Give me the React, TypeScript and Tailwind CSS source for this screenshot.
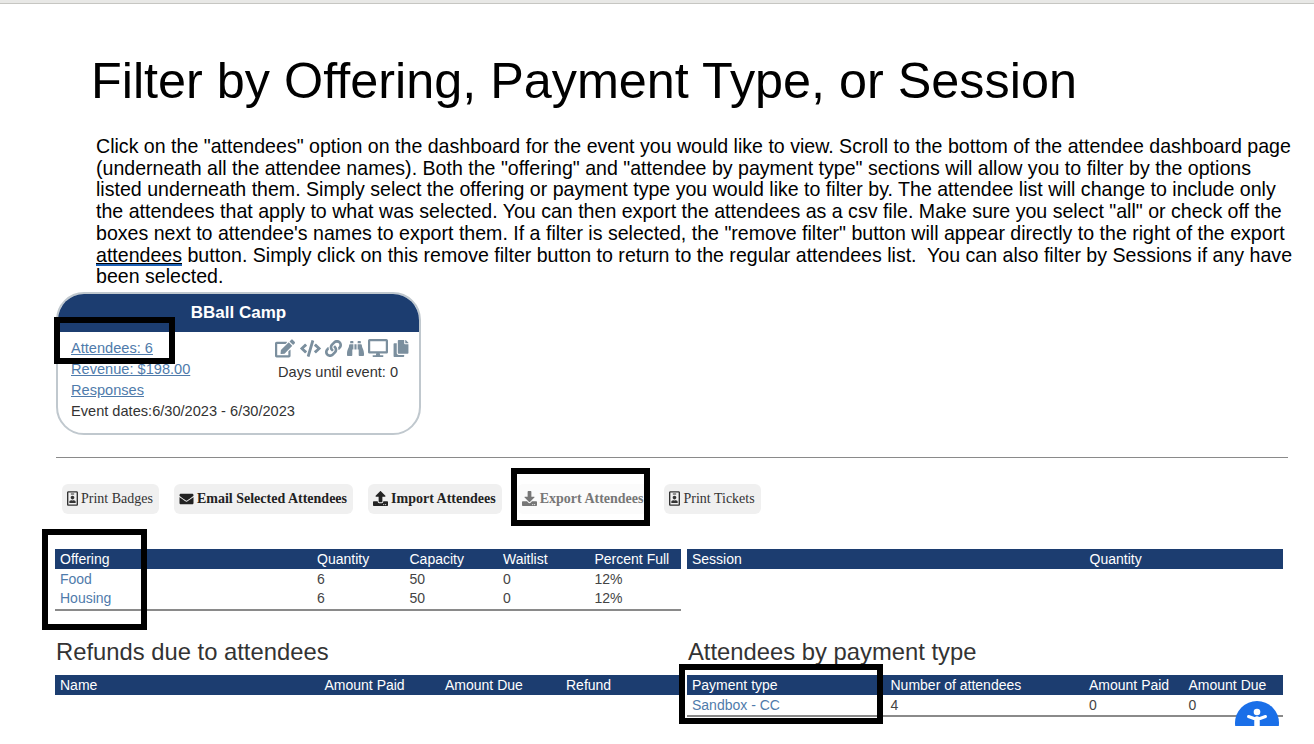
import { FC, ReactNode } from 'react';
import {
  FaBinoculars,
  FaCode,
  FaCopy,
  FaDesktop,
  FaDownload,
  FaEdit,
  FaEnvelope,
  FaLink,
  FaRegIdBadge,
  FaUpload,
} from 'react-icons/fa';

const Callout: FC<{ className: string }> = ({ className }) => (
  <div className={`absolute border-[6px] border-black ${className}`} />
);

const ToolButton: FC<{ icon: ReactNode; label: string; className?: string; box?: string }> = ({
  icon,
  label,
  className = '',
  box = 'bg-[#f0f0f0]',
}) => (
  <div
    className={`flex h-[30px] items-center gap-[3px] rounded-md pl-[5px] pr-[6px] text-[14px] ${box} ${className}`}
    style={{ fontFamily: '"Liberation Serif", serif' }}
  >
    {icon}
    <span>{label}</span>
  </div>
);

const HeaderRow: FC<{ cols: string; labels: string[] }> = ({ cols, labels }) => (
  <div className={`grid h-[20px] items-center bg-[#1c3d70] pl-[5px] text-[14px] text-white ${cols}`}>
    {labels.map((l) => (
      <span key={l}>{l}</span>
    ))}
  </div>
);

const offeringCols = 'grid-cols-[257px_92.5px_93.5px_91.5px_1fr]';
const paymentCols = 'grid-cols-[198.5px_198.5px_99.5px_1fr]';
const refundCols = 'grid-cols-[264.5px_120.5px_121px_1fr]';

const App: FC = () => (
  <div
    className="relative h-[744px] w-[1314px] overflow-hidden bg-white text-[#111]"
    style={{ fontFamily: '"Liberation Sans", Arial, sans-serif' }}
  >
    <div className="h-[4px] border-b border-[#c6c6c2] bg-[#e8e8e6]" />
    <h1 className="ml-[91px] mt-[47px] text-[50.35px] font-normal leading-[60px] text-black">
      Filter by Offering, Payment Type, or Session
    </h1>
    <p className="ml-[96px] mt-[25px] w-[1198px] text-[19.58px] leading-[21.7px] text-black">
      Click on the "attendees" option on the dashboard for the event you would like to view. Scroll to the bottom of the attendee dashboard page (underneath all the attendee names). Both the "offering" and "attendee by payment type" sections will allow you to filter by the options listed underneath them. Simply select the offering or payment type you would like to filter by. The attendee list will change to include only the attendees that apply to what was selected. You can then export the attendees as a csv file. Make sure you select "all" or check off the boxes next to attendee's names to export them. If a filter is selected, the "remove filter" button will appear directly to the right of the export{' '}
      <span className="inline-block border-b-2 border-[#1a5fb4] leading-[18px] underline decoration-black decoration-1 underline-offset-[1px]">
        attendees
      </span>{' '}
      button. Simply click on this remove filter button to return to the regular attendees list.&nbsp; You can also filter by Sessions if any have been selected.
    </p>

    {/* event card */}
    <div className="ml-[56px] mt-[4px] h-[143px] w-[365px] overflow-hidden rounded-[28px] border-2 border-[#c0c8ce] text-[14.6px] text-[#333]">
      <div className="flex h-[38px] items-center justify-center bg-[#1c3d70] text-[17px] font-bold text-white">
        BBall Camp
      </div>
      <div className="flex justify-between pl-[13px] pr-[10px]">
        <div className="mt-[6px] flex w-[190px] flex-col whitespace-nowrap leading-[21px]">
          <a className="text-[#4f7bab] underline">Attendees: 6</a>
          <a className="text-[#4f7bab] underline">Revenue: $198.00</a>
          <a className="text-[#4f7bab] underline">Responses</a>
          <span>Event dates:6/30/2023 - 6/30/2023</span>
        </div>
        <div className="mt-[7px] flex flex-col items-center whitespace-nowrap">
          <div className="flex items-center gap-[4.6px] text-[#7b8f9e]">
            <FaEdit className="h-[19px] w-[20px]" />
            <FaCode className="h-[17px] w-[21px]" />
            <FaLink className="h-[17px] w-[17px]" />
            <FaBinoculars className="h-[17px] w-[17px]" />
            <FaDesktop className="h-[18px] w-[20px]" />
            <FaCopy className="h-[17px] w-[16px]" />
          </div>
          <span className="mr-[8px] mt-[4px]">Days until event: 0</span>
        </div>
      </div>
    </div>

    <div className="ml-[56px] mt-[22px] h-px w-[1232px] bg-[#8a8a8a]" />

    {/* action buttons */}
    <div className="ml-[62px] mt-[26px] flex gap-[15px]">
      <ToolButton icon={<FaRegIdBadge className="h-[15px] w-[11px]" />} label="Print Badges" className="text-[#333]" />
      <ToolButton
        icon={<FaEnvelope className="h-[14px] w-[15px]" />}
        label="Email Selected Attendees"
        className="font-bold text-[#222]"
      />
      <ToolButton
        icon={<FaUpload className="h-[15px] w-[15px]" />}
        label="Import Attendees"
        className="font-bold text-[#222]"
      />
      <ToolButton
        icon={<FaDownload className="h-[15px] w-[15px]" />}
        label="Export Attendees"
        box="bg-[#fbfbfb]"
        className="font-bold text-[#777]"
      />
      <ToolButton icon={<FaRegIdBadge className="h-[15px] w-[11px]" />} label="Print Tickets" className="text-[#333]" />
    </div>

    {/* offering and session tables */}
    <div className="ml-[55px] mt-[35px] flex w-[1228px] gap-[6px] text-[14px] text-[#444]">
      <div className="w-[626px]">
        <HeaderRow cols={offeringCols} labels={['Offering', 'Quantity', 'Capacity', 'Waitlist', 'Percent Full']} />
        <div className="border-b-2 border-[#8a8a8a] pb-[1px]">
          {['Food', 'Housing'].map((name) => (
            <div key={name} className={`grid h-[19.5px] items-center pl-[5px] ${offeringCols}`}>
              <a className="text-[#4f7bab]">{name}</a>
              <span>6</span>
              <span>50</span>
              <span>0</span>
              <span>12%</span>
            </div>
          ))}
        </div>
      </div>
      <div className="flex-1">
        <HeaderRow cols="grid-cols-[397.5px_1fr]" labels={['Session', 'Quantity']} />
      </div>
    </div>

    {/* refunds and payment type tables */}
    <div className="ml-[55px] mt-[27px] flex w-[1228px] gap-[6px] text-[14px] text-[#444]">
      <div className="w-[626px]">
        <h2 className="mb-[9px] pl-px text-[23.8px] font-normal leading-[28px] text-[#333]">Refunds due to attendees</h2>
        <HeaderRow cols={refundCols} labels={['Name', 'Amount Paid', 'Amount Due', 'Refund']} />
      </div>
      <div className="flex-1">
        <h2 className="mb-[9px] pl-px text-[23.8px] font-normal leading-[28px] text-[#333]">Attendees by payment type</h2>
        <HeaderRow cols={paymentCols} labels={['Payment type', 'Number of attendees', 'Amount Paid', 'Amount Due']} />
        <div className={`grid h-[22px] items-center border-b-2 border-[#8a8a8a] pb-[3px] pl-[5px] ${paymentCols}`}>
          <a className="text-[#4f7bab]">Sandbox - CC</a>
          <span>4</span>
          <span>0</span>
          <span>0</span>
        </div>
      </div>
    </div>

    {/* annotation boxes drawn over the page */}
    <Callout className="left-[54px] top-[317px] h-[47px] w-[121px]" />
    <Callout className="left-[511px] top-[468px] h-[58px] w-[139px]" />
    <Callout className="left-[42px] top-[529px] h-[101px] w-[105px]" />
    <Callout className="left-[679px] top-[664px] h-[60px] w-[204px]" />

    {/* accessibility widget, cut off by the window */}
    <div className="absolute left-[1235px] top-[701px] h-[25px] w-[44px] overflow-hidden">
      <div className="h-[44px] w-[44px] rounded-full bg-[#1a6fe8]">
        <svg viewBox="0 0 44 44" className="h-[44px] w-[44px]" fill="none" stroke="white" strokeLinecap="round">
          <circle cx="22" cy="11" r="3.3" fill="white" stroke="none" />
          <path d="M13.500 15.500 L19 17.500 H25 L30.500 15.500" strokeWidth="3" strokeLinejoin="round" />
          <path d="M22 18 V30" strokeWidth="5.500" />
        </svg>
      </div>
    </div>
  </div>
);

export default App;
